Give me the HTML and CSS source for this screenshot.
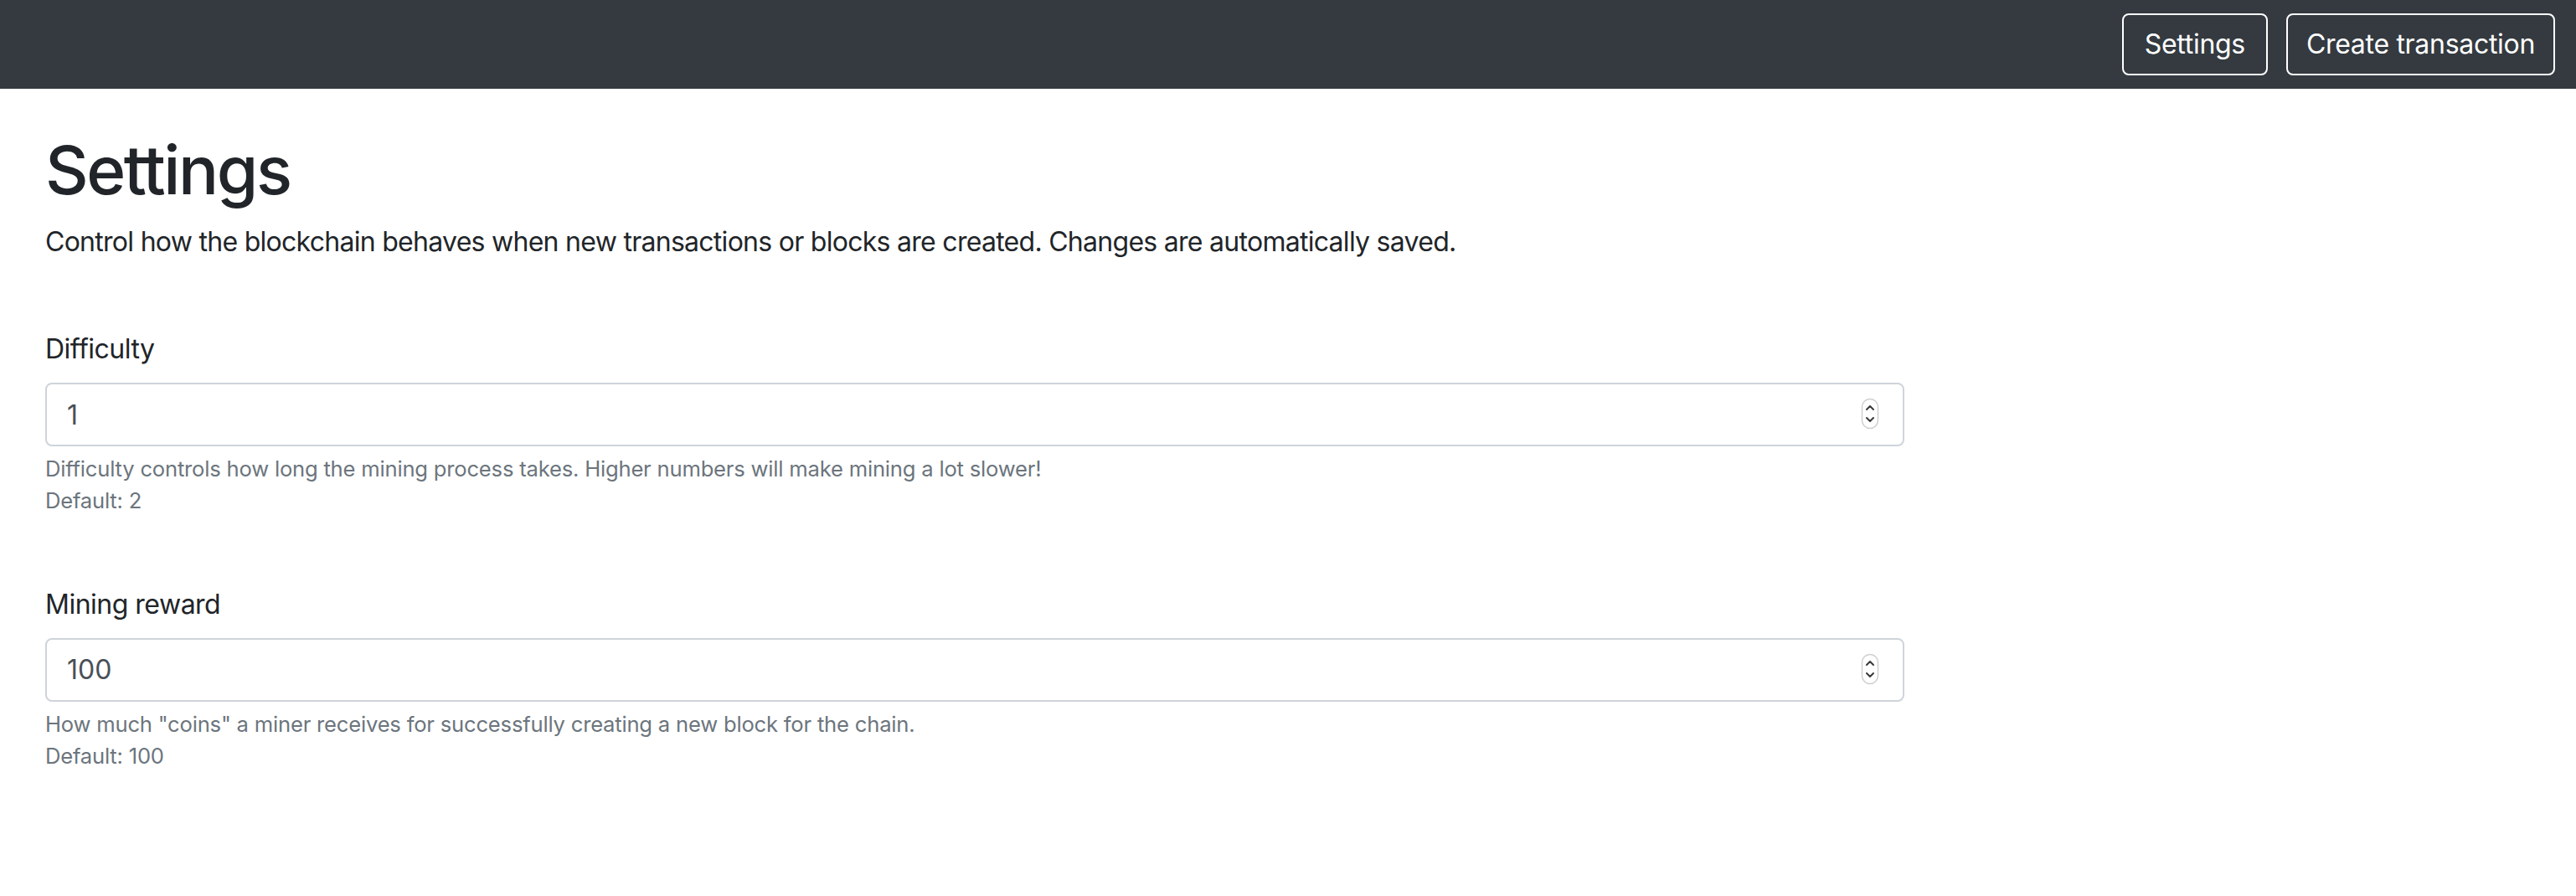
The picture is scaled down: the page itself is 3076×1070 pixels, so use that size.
FILE: index.html
```html
<!DOCTYPE html>
<html lang="en">
<head>
<meta charset="utf-8">
<title>Settings</title>
<link rel="stylesheet" href="styles.css">
</head>
<body>
<nav class="navbar">
  <button class="nav-btn nav-btn-settings">Settings</button>
  <button class="nav-btn">Create transaction</button>
</nav>
<main class="content">
  <h1 class="title">Settings</h1>
  <p class="lead">Control how the blockchain behaves when new transactions or blocks are created. Changes are automatically saved.</p>
  <form class="form">
    <div class="group">
      <label class="label" for="difficulty">Difficulty</label>
      <div class="field">
        <input class="input" id="difficulty" type="number" value="1">
        <svg class="spin" width="22" height="38" viewBox="0 0 22 38"><rect x="1.5" y="1.5" width="19" height="35" rx="9.5" fill="#fff" stroke="#cfcfcf" stroke-width="1.5"/><path d="M7 14 L11 10 L15 14" fill="none" stroke="#3a3a3a" stroke-width="2" stroke-linecap="round" stroke-linejoin="round"/><path d="M7 24 L11 28 L15 24" fill="none" stroke="#3a3a3a" stroke-width="2" stroke-linecap="round" stroke-linejoin="round"/></svg>
      </div>
      <small class="help">Difficulty controls how long the mining process takes. Higher numbers will make mining a lot slower!<br>Default: 2</small>
    </div>
    <div class="group">
      <label class="label" for="reward">Mining reward</label>
      <div class="field">
        <input class="input" id="reward" type="number" value="100">
        <svg class="spin" width="22" height="38" viewBox="0 0 22 38"><rect x="1.5" y="1.5" width="19" height="35" rx="9.5" fill="#fff" stroke="#cfcfcf" stroke-width="1.5"/><path d="M7 14 L11 10 L15 14" fill="none" stroke="#3a3a3a" stroke-width="2" stroke-linecap="round" stroke-linejoin="round"/><path d="M7 24 L11 28 L15 24" fill="none" stroke="#3a3a3a" stroke-width="2" stroke-linecap="round" stroke-linejoin="round"/></svg>
      </div>
      <small class="help">How much "coins" a miner receives for successfully creating a new block for the chain.<br>Default: 100</small>
    </div>
  </form>
</main>
</body>
</html>
```
FILE: styles.css
```css
* { box-sizing: border-box; }
html, body { margin: 0; padding: 0; background: #fff; }
body {
  font-family: Inter, "Noto Sans", "Liberation Sans", sans-serif;
  color: #212529;
  font-size: 32px;
  line-height: 1.5;
}
.navbar {
  background: #343a40;
  height: 106px;
  display: flex;
  justify-content: flex-end;
  align-items: center;
  gap: 22px;
  padding: 0 25px;
}
.nav-btn {
  font-family: inherit;
  font-size: 32px;
  line-height: 48px;
  height: 74px;
  padding: 0 22px;
  color: #fff;
  background: transparent;
  border: 2px solid #fff;
  border-radius: 8px;
  letter-spacing: -0.3px;
}
.nav-btn-settings { padding: 0 25px; }
.content {
  padding: 49px 54px 0 54px;
}
.title {
  font-size: 80px;
  font-weight: 500;
  line-height: 96px;
  margin: 0 0 14px 0;
  letter-spacing: -2.4px;
}
.lead {
  margin: 0 0 80px 0;
  letter-spacing: -0.72px;
}
.form { width: 2220px; }
.group { margin-bottom: 80px; }
.label {
  display: block;
  margin-bottom: 16px;
  letter-spacing: -0.5px;
}
.field { position: relative; }
.input {
  display: block;
  width: 100%;
  height: 76px;
  padding: 0 24px;
  font-family: inherit;
  font-size: 32px;
  color: #495057;
  border: 2px solid #ced4da;
  border-radius: 8px;
  background: #fff;
  outline: none;
  -moz-appearance: textfield;
}
.input::-webkit-inner-spin-button,
.input::-webkit-outer-spin-button { -webkit-appearance: none; margin: 0; }
.spin {
  position: absolute;
  right: 30px;
  top: 18px;
}
.help {
  display: block;
  margin-top: 8px;
  font-size: 25.6px;
  line-height: 38.4px;
  color: #6c757d;
  letter-spacing: -0.2px;
}
```
